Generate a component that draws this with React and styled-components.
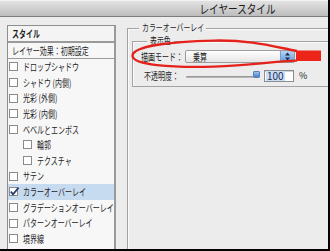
import styled, { createGlobalStyle } from 'styled-components';

const GlobalStyle = createGlobalStyle`
  html, body {
    margin: 0;
    padding: 0;
    background: #ececec;
    overflow: hidden;
  }
  body {
    font-family: "Noto Sans CJK JP", "Noto Sans", sans-serif;
    color: #1e1e1e;
  }
`;

const effects = [
  { label: 'ドロップシャドウ' },
  { label: 'シャドウ (内側)' },
  { label: '光彩 (外側)' },
  { label: '光彩 (内側)' },
  { label: 'ベベルとエンボス' },
  { label: '輪郭', indent: true },
  { label: 'テクスチャ', indent: true },
  { label: 'サテン' },
  { label: 'カラーオーバーレイ', checked: true },
  { label: 'グラデーションオーバーレイ' },
  { label: 'パターンオーバーレイ' },
  { label: '境界線' },
];

function CheckBox({ checked }) {
  return (
    <BoxIcon width="11" height="10" viewBox="0 0 11 10">
      <rect x="0.5" y="0.5" width="8" height="8" fill="#fff" stroke="#8a8a8a" />
      {checked && (
        <path
          d="M1.8 4.6 L4 7.4 L9.6 0.6"
          fill="none"
          stroke="#283c66"
          strokeWidth="1.7"
        />
      )}
    </BoxIcon>
  );
}

function Annotation() {
  return (
    <Mark width="200" height="36" viewBox="128 38 200 36">
      <path
        d="M298 52 C272 47 252 41 215 41.6 C170 42.4 133.5 47.5 133.5 56.8 C133.5 66 172 68.8 215 67.6 C252 66.6 272 62.5 298 61.6"
        fill="none"
        stroke="#e4221b"
        strokeWidth="2.4"
      />
      <rect x="297" y="51.5" width="25" height="10.5" fill="#ec2419" />
    </Mark>
  );
}

function GroupBox({ title, lead, width, inner, children }) {
  return (
    <Group $inner={inner}>
      <GroupHead>
        <HeadLead $w={lead} />
        <HeadTitle $w={width}>
          <Squeeze $size={9.6} $scale={0.72}>{title}</Squeeze>
        </HeadTitle>
        <HeadRest />
      </GroupHead>
      <GroupBody $inner={inner}>{children}</GroupBody>
    </Group>
  );
}

export default function App() {
  return (
    <>
      <GlobalStyle />
      <Window>
        <TitleBar>
          <Squeeze $size={12} $scale={0.8} $origin="center">レイヤースタイル</Squeeze>
        </TitleBar>
        <Body>
          <StylePanel>
            <PanelHeader>
              <Squeeze $bold>スタイル</Squeeze>
            </PanelHeader>
            <PresetRow>
              <Squeeze>レイヤー効果：初期設定</Squeeze>
            </PresetRow>
            <EffectList>
              {effects.map((fx) => (
                <EffectRow key={fx.label} $selected={fx.checked} $indent={fx.indent}>
                  <CheckBox checked={fx.checked} />
                  <Squeeze>{fx.label}</Squeeze>
                </EffectRow>
              ))}
            </EffectList>
          </StylePanel>

          <Options>
            <GroupBox title="カラーオーバーレイ" lead={11} width={67}>
              <GroupBox title="表示色" lead={14} width={27} inner>
                <FieldRow>
                  <BlendLabel>
                    <Squeeze>描画モード：</Squeeze>
                  </BlendLabel>
                  <SelectBox>
                    <Squeeze>乗算</Squeeze>
                    <Stepper>
                      <svg width="7" height="9" viewBox="0 0 7 9">
                        <path d="M3.5 0.5 L6 3.5 L1 3.5 Z" fill="#1c2a44" />
                        <path d="M3.5 8.5 L6 5.5 L1 5.5 Z" fill="#1c2a44" />
                      </svg>
                    </Stepper>
                  </SelectBox>
                </FieldRow>
                <FieldRow $second>
                  <OpacityLabel>
                    <Squeeze>不透明度：</Squeeze>
                  </OpacityLabel>
                  <Track>
                    <Knob />
                  </Track>
                  <NumberBox>
                    <Selected>100</Selected>
                  </NumberBox>
                  <Percent>%</Percent>
                </FieldRow>
              </GroupBox>
            </GroupBox>
            <Annotation />
          </Options>
        </Body>
      </Window>
    </>
  );
}

const Squeeze = styled.span`
  display: inline-block;
  white-space: nowrap;
  font-size: ${({ $size }) => $size || 10}px;
  font-weight: ${({ $bold }) => ($bold ? 'bold' : 'normal')};
  line-height: 1.15;
  transform: scaleX(${({ $scale }) => $scale || 0.7});
  transform-origin: ${({ $origin }) => $origin || 'left'} center;
`;

const Window = styled.div`
  width: 330px;
  height: 251px;
  box-sizing: border-box;
  border-right: 2px solid #000;
  border-bottom: 2px solid #000;
  background: #ececec;
  display: flex;
  flex-direction: column;
  overflow: hidden;
`;

const TitleBar = styled.div`
  height: 17px;
  flex: none;
  box-sizing: border-box;
  padding-left: 148px;
  display: flex;
  align-items: center;
  justify-content: center;
  background: linear-gradient(#e2e2e2, #bdbdbd);
  border-top: 1px solid #f2f2f2;
  border-bottom: 1px solid #7c7c7c;
  color: #1a1a1a;
`;

const Body = styled.div`
  flex: 1;
  display: flex;
  align-items: stretch;
  padding-left: 7px;
  min-height: 0;
`;

const StylePanel = styled.div`
  width: 109px;
  margin-top: 8px;
  box-sizing: border-box;
  border: 1px solid #8e8e8e;
  border-bottom: none;
  border-right: 2px solid #9a9a9a;
  background: #f7f7f7;
  display: flex;
  flex-direction: column;
  overflow: hidden;
`;

const PanelHeader = styled.div`
  height: 17px;
  flex: none;
  box-sizing: border-box;
  padding-left: 4px;
  display: flex;
  align-items: center;
  background: #f4f4f4;
  border-bottom: 2px solid #9a9a9a;
`;

const PresetRow = styled.div`
  height: 16px;
  flex: none;
  box-sizing: border-box;
  padding: 1px 0 0 4px;
  display: flex;
  align-items: center;
  border-bottom: 1px solid #9a9a9a;
`;

const EffectList = styled.div`
  display: flex;
  flex-direction: column;
`;

const EffectRow = styled.div`
  height: 15.64px;
  flex: none;
  display: flex;
  align-items: center;
  gap: 3px;
  padding-left: ${({ $indent }) => ($indent ? '15px' : '1px')};
  background: ${({ $selected }) => ($selected ? '#c7dbf0' : 'transparent')};
`;

const BoxIcon = styled.svg`
  flex: none;
  margin-top: 1px;
`;

const Options = styled.div`
  position: relative;
  flex: 1;
  margin-left: 11px;
  margin-top: 5px;
  display: flex;
  flex-direction: column;
`;

const Group = styled.div`
  display: flex;
  flex-direction: column;
  flex: ${({ $inner }) => ($inner ? 'none' : '1')};
  margin-top: ${({ $inner }) => ($inner ? '1px' : '0')};
`;

const GroupHead = styled.div`
  height: 12px;
  flex: none;
  display: flex;
`;

const HeadLead = styled.div`
  width: ${({ $w }) => $w}px;
  flex: none;
  margin-top: 6px;
  border-top: 1px solid #a2a2a2;
  border-left: 1px solid #a2a2a2;
  box-shadow: inset 1px 1px 0 #fbfbfb;
`;

const HeadTitle = styled.div`
  width: ${({ $w }) => $w}px;
  box-sizing: border-box;
  flex: none;
  display: flex;
  align-items: center;
  padding: 0 3px;
  overflow: visible;
`;

const HeadRest = styled.div`
  flex: 1;
  margin-top: 6px;
  border-top: 1px solid #a2a2a2;
  box-shadow: inset 0 1px 0 #fbfbfb;
`;

const GroupBody = styled.div`
  flex: 1;
  border-left: 1px solid #a2a2a2;
  border-bottom: ${({ $inner }) => ($inner ? '1px solid #a2a2a2' : 'none')};
  box-shadow: inset 1px 0 0 #fbfbfb;
  padding: ${({ $inner }) => ($inner ? '3px 0 4px 8px' : '0 0 0 4px')};
`;

const FieldRow = styled.div`
  display: flex;
  align-items: center;
  height: 13px;
  margin-top: ${({ $second }) => ($second ? '6px' : '0')};
  white-space: nowrap;
`;

const BlendLabel = styled.span`
  width: 44px;
  flex: none;
  display: flex;
  align-items: center;
`;

const OpacityLabel = styled.span`
  width: 42px;
  margin-left: 3px;
  flex: none;
  display: flex;
  align-items: center;
`;

const SelectBox = styled.div`
  width: 110px;
  height: 13px;
  box-sizing: border-box;
  flex: none;
  display: flex;
  align-items: center;
  justify-content: space-between;
  padding-left: 7px;
  border: 1px solid #9c9c9c;
  border-radius: 2px;
  background: linear-gradient(#ffffff, #e6e6e6);
`;

const Stepper = styled.div`
  width: 13px;
  height: 11px;
  display: flex;
  align-items: center;
  justify-content: center;
  border-radius: 0 2px 2px 0;
  background: linear-gradient(#b9d4f3, #5f9ae0);
  border-left: 1px solid #7c9cc4;
`;

const Track = styled.div`
  position: relative;
  width: 74px;
  height: 2px;
  margin-top: 2px;
  flex: none;
  background: linear-gradient(#8a8a8a, #c4c4c4);
  border-radius: 1px;
`;

const Knob = styled.div`
  position: absolute;
  right: 0;
  top: -5px;
  width: 5px;
  height: 5px;
  border-radius: 1px 1px 2px 2px;
  background: linear-gradient(#9cc2ee, #3f7fd0);
  border: 1px solid #5b7fb0;
`;

const NumberBox = styled.div`
  width: 30px;
  height: 12px;
  box-sizing: border-box;
  margin-left: 4px;
  flex: none;
  display: flex;
  align-items: center;
  padding-left: 1px;
  background: #fff;
  border: 1px solid #8c8c8c;
  box-shadow: inset 0 1px 0 #d0d0d0;
  font-size: 10px;
`;

const Selected = styled.span`
  background: #c9def6;
  color: #1d2d55;
  line-height: 10px;
  padding: 0 1px;
`;

const Percent = styled.span`
  margin-left: 5px;
  font-size: 9px;
`;

const Mark = styled.svg`
  position: absolute;
  left: 0;
  top: 15px;
  pointer-events: none;
`;
